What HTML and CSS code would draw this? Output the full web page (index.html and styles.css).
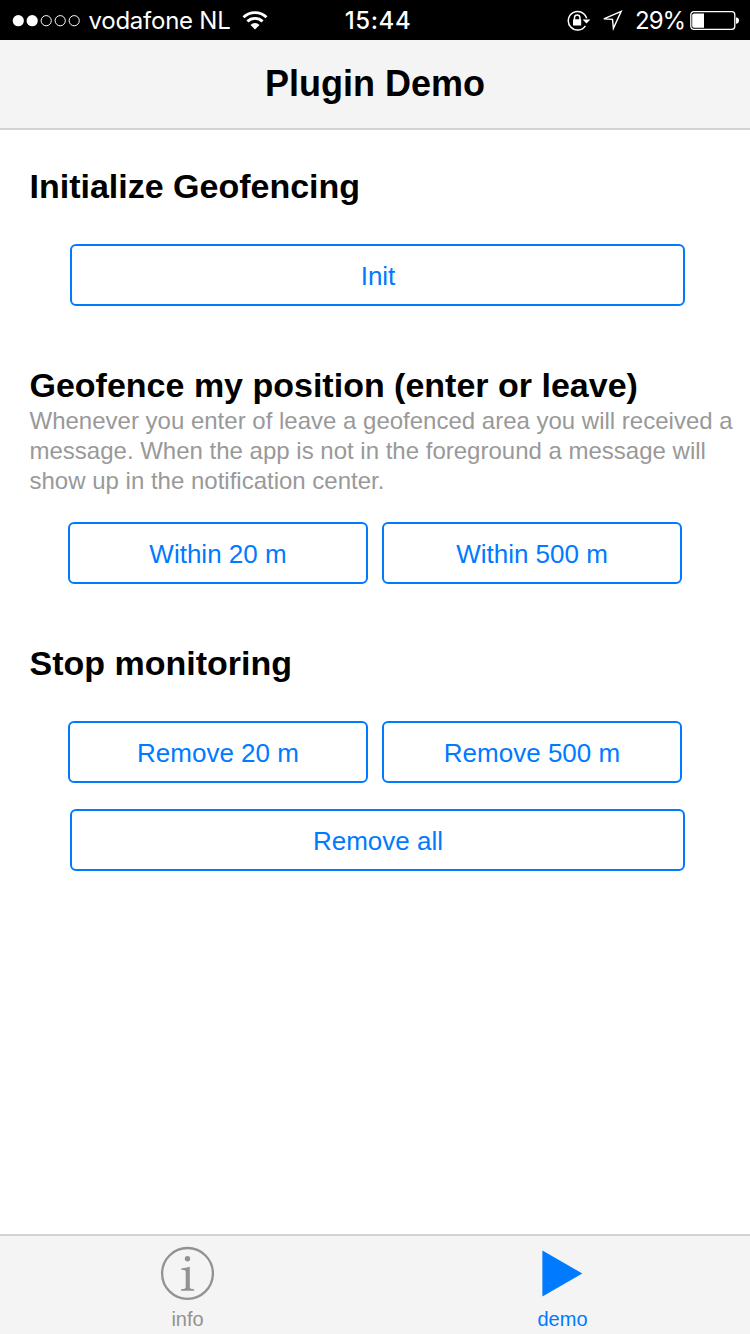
FILE: index.html
```html
<!DOCTYPE html>
<html lang="en">
<head>
<meta charset="utf-8">
<title>Plugin Demo</title>
<link rel="stylesheet" href="styles.css">
</head>
<body>
<div class="app">
  <div class="status">
    <div class="status-left">
      <svg class="signal" width="70" height="14" viewBox="0 0 70 14" fill="none" stroke="#fff">
        <circle cx="6.3" cy="6.7" r="5.6" fill="#fff" stroke="none"/>
        <circle cx="20.2" cy="6.7" r="5.6" fill="#fff" stroke="none"/>
        <circle cx="34.2" cy="6.7" r="5.1"/>
        <circle cx="48.2" cy="6.7" r="5.1"/>
        <circle cx="62.2" cy="6.7" r="5.1"/>
      </svg>
      <span class="carrier">vodafone NL</span>
      <svg class="wifi" width="26" height="19" viewBox="0 0 26 19" fill="none" stroke="#fff" stroke-width="2.9">
        <path d="M1.5 6.3A16.6 16.6 0 0 1 24.5 6.3"/>
        <path d="M5.4 10.4A11 11 0 0 1 20.6 10.4"/>
        <path d="M13 18.4L8.5 13.9A6.4 6.4 0 0 1 17.5 13.9Z" fill="#fff" stroke="none"/>
      </svg>
    </div>
    <span class="clock">15:44</span>
    <div class="status-right">
      <svg class="lock" width="24" height="22" viewBox="0 0 24 22" fill="none" stroke="#fff">
        <path d="M19.6 8.4A9.3 9.3 0 1 0 18.4 15.8" stroke-width="1.5"/>
        <path d="M15.6 9.4H23.4L19.5 13.6Z" fill="#fff" stroke="none"/>
        <path d="M7.5 10V7.6A2.7 2.7 0 0 1 12.9 7.6V10" stroke-width="1.5"/>
        <rect x="6" y="9.2" width="8.2" height="6.3" rx=".6" fill="#fff" stroke="none"/>
      </svg>
      <svg class="arrow" width="21" height="21" viewBox="0 0 21 21" fill="none" stroke="#fff" stroke-width="1.4">
        <path d="M19.2 1.4L1.8 8.9L10.5 9.4L11.4 18.4Z"/>
      </svg>
      <span class="percent">29%</span>
      <svg class="battery" width="50" height="20" viewBox="0 0 50 20" fill="none">
        <rect x=".8" y=".7" width="44" height="17.6" rx="3" stroke="#fff" stroke-width="1.3"/>
        <path d="M4 2.4H14V16.7H4Q2.2 16.7 2.2 14.9V4.2Q2.2 2.4 4 2.4Z" fill="#fff"/>
        <path d="M46 6.2Q49 6.7 49 9.5Q49 12.3 46 12.8Z" fill="#fff"/>
      </svg>
    </div>
  </div>
  <header class="navbar">Plugin Demo</header>
  <main class="content">
    <h2 class="heading">Initialize Geofencing</h2>
    <button class="btn wide">Init</button>
    <h2 class="heading next">Geofence my position (enter or leave)</h2>
    <p class="hint">Whenever you enter of leave a geofenced area you will received a message. When the app is not in the foreground a message will show up in the notification center.</p>
    <div class="pair after-hint">
      <button class="btn">Within 20 m</button>
      <button class="btn">Within 500 m</button>
    </div>
    <h2 class="heading next">Stop monitoring</h2>
    <div class="pair">
      <button class="btn">Remove 20 m</button>
      <button class="btn">Remove 500 m</button>
    </div>
    <button class="btn wide last">Remove all</button>
  </main>
  <nav class="tabbar">
    <a class="tab">
      <svg class="tab-icon" width="54" height="54" viewBox="0 0 54 54" fill="none" stroke="#929292">
        <circle cx="27.5" cy="27.4" r="25.4" stroke-width="2.3"/>
        <circle cx="27.5" cy="12.8" r="2.7" fill="#929292" stroke="none"/>
        <path d="M21.2 22.4Q26 21.8 29.8 20.7V41.2Q29.8 43 34.2 43.2V44.8H21V43.2Q25.7 43 25.7 41.2V25.4Q25.7 23.6 21.2 23.8Z" fill="#929292" stroke="none"/>
      </svg>
      <span class="tab-label">info</span>
    </a>
    <a class="tab active">
      <svg class="tab-icon" width="54" height="54" viewBox="0 0 54 54">
        <path d="M7.4 4.5V50.5L47.3 27.5Z" fill="#007aff"/>
      </svg>
      <span class="tab-label">demo</span>
    </a>
  </nav>
</div>
</body>
</html>
```
FILE: styles.css
```css
* { box-sizing: border-box; }

body {
  margin: 0;
  background: #fff;
  font-family: "Liberation Sans", Arial, sans-serif;
}

.app {
  display: flex;
  flex-direction: column;
  width: 750px;
  height: 1334px;
}

.status {
  display: grid;
  grid-template-columns: 1fr auto 1fr;
  align-items: center;
  height: 40px;
  padding: 1px 10px 0 12px;
  background: #000;
  color: #fff;
  font: 24px/38px Inter, sans-serif;
}

.status-left, .status-right { display: flex; align-items: center; }
.status-right { justify-content: flex-end; }
.carrier { width: 141px; margin-left: 6.5px; padding-top: 1px; letter-spacing: -.25px; white-space: nowrap; }
.wifi { margin-left: 12px; }
.clock { margin-left: 4px; padding-top: 1px; font-weight: 500; letter-spacing: .6px; }
.arrow { margin-left: 11px; }
.percent { width: 49px; margin-left: 12px; padding-top: 1px; letter-spacing: -1px; }
.battery { margin-left: 6px; }

.navbar {
  height: 90px;
  border-bottom: 2px solid #d3d3d3;
  background: #f4f4f4;
  font-size: 36px;
  font-weight: bold;
  line-height: 87px;
  text-align: center;
}

.content {
  flex: 1;
  display: flex;
  flex-direction: column;
  padding: 36px 14px 0 29.5px;
}

.heading {
  margin: 0 0 38px;
  font-size: 34px;
  line-height: 40px;
}
.heading.next { margin-top: 59px; }
.heading:has(+ .hint) { margin-bottom: 1px; }

.hint {
  margin: 0;
  color: #999;
  font-size: 24px;
  line-height: 30px;
}

.pair { display: flex; gap: 14px; margin-left: 38.5px; }
.after-hint { margin-top: 26px; }

.btn {
  width: 300px;
  height: 62px;
  padding: 2px 0 0;
  border: 2px solid #007aff;
  border-radius: 6px;
  background: #fff;
  color: #007aff;
  font: 26px/56px "Liberation Sans", Arial, sans-serif;
}
.btn.wide { width: 615px; margin-left: 40.5px; padding-left: 1px; }
.btn.last { margin-top: 26px; }

.tabbar {
  display: flex;
  height: 100px;
  border-top: 2px solid #d3d3d3;
  background: #f4f4f4;
}

.tab {
  flex: 1;
  display: flex;
  flex-direction: column;
  align-items: center;
  padding-top: 10px;
  color: #929292;
}
.tab.active { color: #007aff; }
.tab-icon { margin-right: 1px; }
.tab-label { margin-top: 7px; font-size: 20px; line-height: 24px; }
```
